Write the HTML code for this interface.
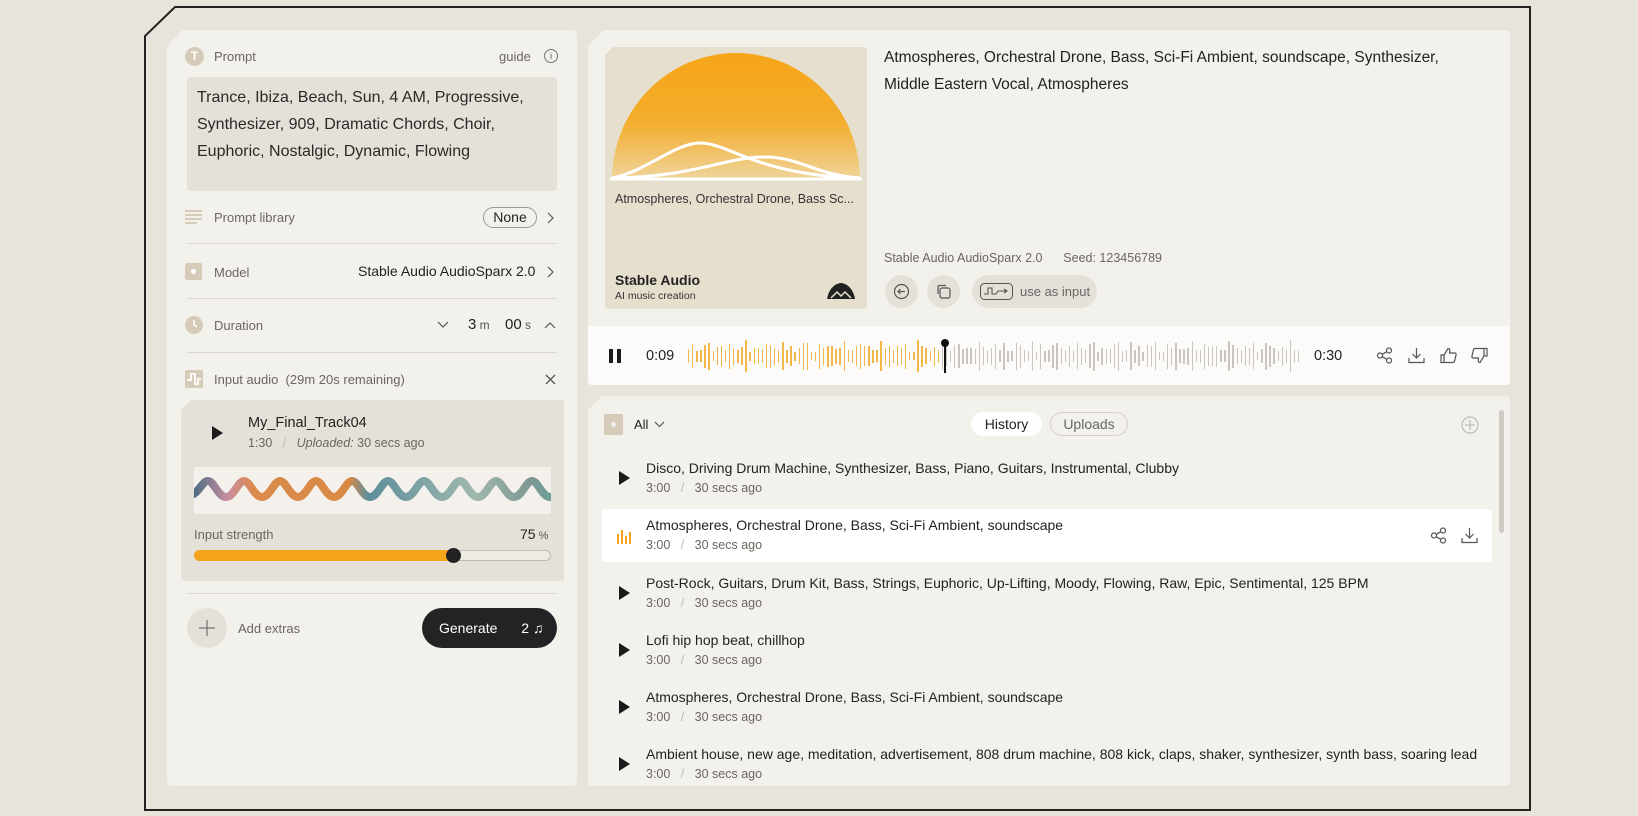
<!DOCTYPE html>
<html><head><meta charset="utf-8">
<style>
*{margin:0;padding:0;box-sizing:border-box}
body{width:1638px;height:816px;background:#e8e4dc;font-family:"Liberation Sans",sans-serif;color:#222;position:relative;overflow:hidden}
.a{position:absolute}
.panel{background:#f3f1ec;border-radius:4px}
.lbl{font-size:13px;color:#6b665f}
.sep{position:absolute;left:187px;width:370px;height:1px;background:#dcd7cd}
.t{font-size:14px;color:#222;white-space:nowrap;overflow:hidden;text-overflow:ellipsis;max-width:835px}
.sub{font-size:12.5px;color:#6b665f;white-space:nowrap}
.play{width:0;height:0;border-left:11px solid #1a1a1a;border-top:7px solid transparent;border-bottom:7px solid transparent}
</style></head><body>
<svg class="a" style="left:0;top:0" width="1638" height="816"><path d="M145,810 L145,36 L175,7 L1530,7 L1530,810 Z" fill="none" stroke="#222" stroke-width="2"/></svg>

<div class="a panel" style="left:167px;top:30px;width:410px;height:756px;clip-path:polygon(16px 0,100% 0,100% 100%,0 100%,0 16px)"></div>
<div class="a" style="left:185px;top:47px;width:19px;height:19px;border-radius:50%;background:#d6cbb8;color:#fff;font-size:12px;font-weight:bold;text-align:center;line-height:19px">T</div>
<div class="a lbl" style="left:214px;top:49px">Prompt</div>
<div class="a lbl" style="left:499px;top:49px">guide</div>
<div class="a" style="left:544px;top:49px;width:14px;height:14px;border:1px solid #777;border-radius:50%;font-size:9px;text-align:center;line-height:12px;color:#555">i</div>
<div class="a" style="left:187px;top:77px;width:370px;height:114px;background:#e6e1d8;border-radius:3px;padding:7px 10px;font-size:16px;line-height:27px;color:#2a2a2a">Trance, Ibiza, Beach, Sun, 4 AM, Progressive,<br>Synthesizer, 909, Dramatic Chords, Choir,<br>Euphoric, Nostalgic, Dynamic, Flowing</div>

<svg class="a" style="left:185px;top:209px" width="17" height="17"><g stroke="#d6cbb8" stroke-width="2"><line x1="0" y1="2" x2="17" y2="2"/><line x1="0" y1="6" x2="17" y2="6"/><line x1="0" y1="10" x2="17" y2="10"/><line x1="0" y1="14" x2="12" y2="14"/></g></svg>
<div class="a lbl" style="left:214px;top:210px">Prompt library</div>
<div class="a" style="left:483px;top:207px;width:54px;height:21px;border:1px solid #999;border-radius:11px;font-size:14px;text-align:center;line-height:19px">None</div>
<svg class="a" style="left:546px;top:212px" width="8" height="12"><path d="M2,1 L7,6 L2,11" fill="none" stroke="#555" stroke-width="1.2"/></svg>
<div class="sep" style="top:243px"></div>

<div class="a" style="left:185px;top:263px;width:17px;height:17px;background:#d6cbb8;border-radius:2px"><div style="margin:6px;width:5px;height:5px;border-radius:50%;background:#fff"></div></div>
<div class="a lbl" style="left:214px;top:265px">Model</div>
<div class="a" style="left:358px;top:263px;font-size:14px">Stable Audio AudioSparx 2.0</div>
<svg class="a" style="left:546px;top:266px" width="8" height="12"><path d="M2,1 L7,6 L2,11" fill="none" stroke="#555" stroke-width="1.2"/></svg>
<div class="sep" style="top:298px"></div>

<svg class="a" style="left:185px;top:316px" width="18" height="18"><circle cx="9" cy="9" r="9" fill="#d6cbb8"/><path d="M9,4 V9 L12,11" stroke="#fff" stroke-width="1.5" fill="none"/></svg>
<div class="a lbl" style="left:214px;top:318px">Duration</div>
<svg class="a" style="left:437px;top:321px" width="12" height="8"><path d="M1,1 L6,6 L11,1" fill="none" stroke="#555" stroke-width="1.2"/></svg>
<div class="a" style="left:468px;top:316px;font-size:15px">3<span style="font-size:12px;color:#555"> m</span></div>
<div class="a" style="left:505px;top:316px;font-size:15px">00<span style="font-size:12px;color:#555"> s</span></div>
<svg class="a" style="left:544px;top:321px" width="12" height="8"><path d="M1,7 L6,2 L11,7" fill="none" stroke="#555" stroke-width="1.2"/></svg>
<div class="sep" style="top:352px"></div>

<svg class="a" style="left:185px;top:370px" width="18" height="18"><rect width="18" height="18" rx="2" fill="#d6cbb8"/><path d="M2,10 H6 V4 H10 V14 H13 V9 H16" stroke="#fff" stroke-width="1.8" fill="none"/></svg>
<div class="a lbl" style="left:214px;top:372px">Input audio &nbsp;(29m 20s remaining)</div>
<svg class="a" style="left:545px;top:374px" width="11" height="11"><path d="M1,1 L10,10 M10,1 L1,10" stroke="#555" stroke-width="1.3"/></svg>

<div class="a" style="left:181px;top:400px;width:383px;height:181px;background:#e6e1d8;border-radius:3px;clip-path:polygon(10px 0,100% 0,100% 100%,0 100%,0 10px)"></div>
<div class="a play" style="left:212px;top:426px"></div>
<div class="a" style="left:248px;top:415px;font-size:14.5px">My_Final_Track04</div>
<div class="a sub" style="left:248px;top:436px">1:30 &nbsp;&nbsp;<span style="color:#bbb">/</span>&nbsp;&nbsp; <i>Uploaded:</i> 30 secs ago</div>
<div class="a" style="left:194px;top:467px;width:357px;height:47px;background:#f4f1ec;border-radius:2px;overflow:hidden">
<svg width="357" height="47"><defs><linearGradient id="wg" x1="0" x2="1"><stop offset="0" stop-color="#3d6a80"/><stop offset=".1" stop-color="#c98da0"/><stop offset=".17" stop-color="#db8a4a"/><stop offset=".42" stop-color="#d88a45"/><stop offset=".47" stop-color="#5e8e9a"/><stop offset=".75" stop-color="#9fb8ae"/><stop offset=".9" stop-color="#7f9894"/><stop offset="1" stop-color="#5aa59a"/></linearGradient></defs>
<path d="M-4,28 C4,28 8,14 14,14 C20,14 24,30 32,30 C40,30 44,14 50,14 C56,14 60,30 68,30 C76,30 80,14 86,14 C92,14 96,30 104,30 C112,30 116,14 122,14 C128,14 132,30 140,30 C148,30 152,14 158,14 C164,14 168,30 176,30 C184,30 188,14 194,14 C200,14 204,30 212,30 C220,30 224,14 230,14 C236,14 240,30 248,30 C256,30 260,14 266,14 C272,14 276,30 284,30 C292,30 296,14 302,14 C308,14 312,30 320,30 C328,30 332,14 338,14 C344,14 348,30 356,30 C364,30 368,14 374,14" fill="none" stroke="url(#wg)" stroke-width="8"/></svg></div>
<div class="a lbl" style="left:194px;top:527px">Input strength</div>
<div class="a" style="left:520px;top:526px;font-size:14px">75<span style="font-size:11px;color:#555"> %</span></div>
<div class="a" style="left:194px;top:550px;width:357px;height:11px;border:1px solid #bbb;border-radius:6px;background:#eeebe5"></div>
<div class="a" style="left:194px;top:550px;width:260px;height:11px;border-radius:6px;background:#f5a51c"></div>
<div class="a" style="left:446px;top:548px;width:15px;height:15px;border-radius:50%;background:#222"></div>
<div class="sep" style="top:593px"></div>
<div class="a" style="left:187px;top:608px;width:40px;height:40px;border-radius:50%;background:#e6e1d8"></div>
<svg class="a" style="left:198px;top:619px" width="18" height="18"><path d="M9,1 V17 M1,9 H17" stroke="#777" stroke-width="1.3"/></svg>
<div class="a lbl" style="left:238px;top:621px">Add extras</div>
<div class="a" style="left:422px;top:608px;width:135px;height:40px;border-radius:20px;background:#232326;color:#fff;font-size:14px;line-height:40px;padding-left:17px">Generate <span style="margin-left:20px">2 ♫</span></div>

<div class="a panel" style="left:588px;top:30px;width:922px;height:355px;clip-path:polygon(16px 0,100% 0,100% 100%,0 100%,0 16px)"></div>
<div class="a" style="left:605px;top:47px;width:262px;height:262px;background:#e6dfcd;border-radius:3px;overflow:hidden;clip-path:polygon(8px 0,100% 0,100% 100%,0 100%,0 8px)">
<svg width="262" height="140" style="position:absolute;left:0;top:0"><defs><linearGradient id="sun" x1="0" y1="0" x2="0" y2="1"><stop offset="0" stop-color="#f6a517"/><stop offset=".55" stop-color="#f4ad2e"/><stop offset="1" stop-color="#efd59c"/></linearGradient></defs>
<path d="M7,133 A124,127 0 0 1 255,133 Z" fill="url(#sun)"/>
<path d="M7,131 C40,125 70,96 95,96 C125,96 150,128 255,131" fill="none" stroke="#fff" stroke-width="3"/>
<path d="M7,131 C90,130 120,110 160,110 C195,110 210,128 255,131" fill="none" stroke="#fff" stroke-width="3"/>
<line x1="5" y1="132" x2="257" y2="132" stroke="#fff" stroke-width="3"/></svg>
<div class="a" style="left:10px;top:145px;font-size:12.5px;color:#333;white-space:nowrap">Atmospheres, Orchestral Drone, Bass Sc...</div>
<div class="a" style="left:10px;top:225px;font-size:14px;font-weight:bold">Stable Audio</div>
<div class="a" style="left:10px;top:243px;font-size:10.5px;color:#333">AI music creation</div>
<svg class="a" style="left:222px;top:236px" width="28" height="16"><path d="M0,16 C2,4 10,0 14,0 C18,0 26,4 28,16 Z" fill="#222"/><path d="M4,15 L10,9 L14,13 L18,9 L24,15" stroke="#e6dfcd" stroke-width="1.5" fill="none"/></svg>
</div>
<div class="a" style="left:884px;top:44px;font-size:15.5px;line-height:27px;color:#222">Atmospheres, Orchestral Drone, Bass, Sci-Fi Ambient, soundscape, Synthesizer,<br>Middle Eastern Vocal, Atmospheres</div>
<div class="a sub" style="left:884px;top:251px">Stable Audio AudioSparx 2.0 &nbsp;&nbsp;&nbsp;&nbsp; Seed: 123456789</div>
<div class="a" style="left:885px;top:275px;width:33px;height:33px;border-radius:50%;background:#e6e1d8"></div>
<svg class="a" style="left:893px;top:283px" width="17" height="17"><circle cx="8.5" cy="8.5" r="7" fill="none" stroke="#555" stroke-width="1.2"/><path d="M12,8.5 H5 M7.5,6 L5,8.5 L7.5,11" stroke="#555" stroke-width="1.2" fill="none"/></svg>
<div class="a" style="left:927px;top:275px;width:33px;height:33px;border-radius:50%;background:#e6e1d8"></div>
<svg class="a" style="left:935px;top:283px" width="17" height="17"><rect x="5" y="5" width="10" height="10" rx="2" fill="none" stroke="#555" stroke-width="1.2"/><path d="M3,11 V4 A1.5,1.5 0 0 1 4.5,2.5 H11" fill="none" stroke="#555" stroke-width="1.2"/></svg>
<div class="a" style="left:972px;top:275px;width:125px;height:33px;border-radius:17px;background:#e6e1d8;font-size:13px;color:#666;line-height:33px;padding-left:48px">use as input</div>
<svg class="a" style="left:980px;top:283px" width="33" height="17"><rect x=".5" y=".5" width="32" height="16" rx="4" fill="none" stroke="#555"/><path d="M4,11 H8 V5 H12 V11 H16 L18,8 H27 M24,6 L27,8 L24,10" fill="none" stroke="#555" stroke-width="1.1"/></svg>

<div class="a" style="left:588px;top:326px;width:922px;height:59px;background:#fcfbf9;border-radius:0 0 4px 4px"></div>
<div class="a" style="left:609px;top:349px;width:4px;height:14px;background:#1a1a1a"></div>
<div class="a" style="left:617px;top:349px;width:4px;height:14px;background:#1a1a1a"></div>
<div class="a" style="left:646px;top:348px;font-size:14.5px">0:09</div>
<div class="a" id="wave" style="left:688px;top:336px;width:612px;height:40px;display:flex;align-items:center;justify-content:space-between"></div>
<div class="a" style="left:944px;top:342px;width:2px;height:31px;background:#111"></div>
<div class="a" style="left:941px;top:339px;width:8px;height:8px;border-radius:50%;background:#111"></div>
<div class="a" style="left:1314px;top:348px;font-size:14.5px">0:30</div>
<svg class="a" style="left:1376px;top:347px" width="17" height="17"><g fill="none" stroke="#555" stroke-width="1.2"><circle cx="4" cy="8.5" r="2.5"/><circle cx="13" cy="3.5" r="2.5"/><circle cx="13" cy="13.5" r="2.5"/><path d="M6.2,7.3 L10.8,4.7 M6.2,9.7 L10.8,12.3"/></g></svg>
<svg class="a" style="left:1408px;top:347px" width="17" height="17"><g fill="none" stroke="#555" stroke-width="1.2"><path d="M8.5,1 V11 M4.5,7 L8.5,11 L12.5,7 M1,11 V15.5 H16 V11"/></g></svg>
<svg class="a" style="left:1440px;top:347px" width="17" height="17"><path d="M1,8 H4 V15.5 H1 Z M4,8 L8,1.5 C10,1.5 10,3 9.5,6 H15 C16,6 16.3,7 16,8 L14.5,14.5 C14.3,15.2 13.8,15.5 13,15.5 H4" fill="none" stroke="#555" stroke-width="1.2"/></svg>
<svg class="a" style="left:1471px;top:347px" width="17" height="17"><g transform="rotate(180 8.5 8.5)"><path d="M1,8 H4 V15.5 H1 Z M4,8 L8,1.5 C10,1.5 10,3 9.5,6 H15 C16,6 16.3,7 16,8 L14.5,14.5 C14.3,15.2 13.8,15.5 13,15.5 H4" fill="none" stroke="#555" stroke-width="1.2"/></g></svg>

<div class="a panel" style="left:588px;top:396px;width:922px;height:390px;clip-path:polygon(14px 0,100% 0,100% 100%,0 100%,0 14px)"></div>
<div class="a" style="left:604px;top:414px;width:19px;height:21px;background:#d6cbb8;border-radius:2px"><div style="margin:8px 7px;width:5px;height:5px;border-radius:50%;background:#eee"></div></div>
<div class="a" style="left:634px;top:417px;font-size:13px">All</div>
<svg class="a" style="left:654px;top:421px" width="11" height="7"><path d="M1,1 L5.5,5.5 L10,1" fill="none" stroke="#555" stroke-width="1.2"/></svg>
<div class="a" style="left:971px;top:412px;width:71px;height:24px;border-radius:12px;background:#fff;font-size:14px;text-align:center;line-height:24px">History</div>
<div class="a" style="left:1050px;top:412px;width:78px;height:24px;border-radius:12px;border:1px solid #d6d1c8;font-size:14px;text-align:center;line-height:22px;color:#666">Uploads</div>
<svg class="a" style="left:1461px;top:416px" width="18" height="18"><circle cx="9" cy="9" r="8" fill="none" stroke="#bbb" stroke-width="1.2"/><path d="M9,4 V14 M4,9 H14" stroke="#bbb" stroke-width="1.2"/></svg>
<div class="a" style="left:1499px;top:410px;width:5px;height:123px;border-radius:3px;background:#cfcbc4"></div>

<div class="a" style="left:602px;top:509px;width:890px;height:53px;background:#fff;border-radius:3px"></div>

<div class="a play" style="left:619px;top:471px"></div>
<div class="a t" style="left:646px;top:460px">Disco, Driving Drum Machine, Synthesizer, Bass, Piano, Guitars, Instrumental, Clubby</div>
<div class="a sub" style="left:646px;top:481px">3:00 &nbsp;&nbsp;<span style="color:#bbb">/</span>&nbsp;&nbsp; 30 secs ago</div>

<svg class="a" style="left:617px;top:528px" width="14" height="16"><g fill="#f5a51c"><rect x="0" y="6" width="2" height="10"/><rect x="4" y="2" width="2" height="14"/><rect x="8" y="8" width="2" height="8"/><rect x="12" y="4" width="2" height="12"/></g></svg>
<div class="a t" style="left:646px;top:517px">Atmospheres, Orchestral Drone, Bass, Sci-Fi Ambient, soundscape</div>
<div class="a sub" style="left:646px;top:538px">3:00 &nbsp;&nbsp;<span style="color:#bbb">/</span>&nbsp;&nbsp; 30 secs ago</div>
<svg class="a" style="left:1430px;top:527px" width="17" height="17"><g fill="none" stroke="#555" stroke-width="1.2"><circle cx="4" cy="8.5" r="2.5"/><circle cx="13" cy="3.5" r="2.5"/><circle cx="13" cy="13.5" r="2.5"/><path d="M6.2,7.3 L10.8,4.7 M6.2,9.7 L10.8,12.3"/></g></svg>
<svg class="a" style="left:1461px;top:527px" width="17" height="17"><path d="M8.5,1 V11 M4.5,7 L8.5,11 L12.5,7 M1,11 V15.5 H16 V11" fill="none" stroke="#555" stroke-width="1.2"/></svg>

<div class="a play" style="left:619px;top:586px"></div>
<div class="a t" style="left:646px;top:575px">Post-Rock, Guitars, Drum Kit, Bass, Strings, Euphoric, Up-Lifting, Moody, Flowing, Raw, Epic, Sentimental, 125 BPM</div>
<div class="a sub" style="left:646px;top:596px">3:00 &nbsp;&nbsp;<span style="color:#bbb">/</span>&nbsp;&nbsp; 30 secs ago</div>

<div class="a play" style="left:619px;top:643px"></div>
<div class="a t" style="left:646px;top:632px">Lofi hip hop beat, chillhop</div>
<div class="a sub" style="left:646px;top:653px">3:00 &nbsp;&nbsp;<span style="color:#bbb">/</span>&nbsp;&nbsp; 30 secs ago</div>

<div class="a play" style="left:619px;top:700px"></div>
<div class="a t" style="left:646px;top:689px">Atmospheres, Orchestral Drone, Bass, Sci-Fi Ambient, soundscape</div>
<div class="a sub" style="left:646px;top:710px">3:00 &nbsp;&nbsp;<span style="color:#bbb">/</span>&nbsp;&nbsp; 30 secs ago</div>

<div class="a play" style="left:619px;top:757px"></div>
<div class="a t" style="left:646px;top:746px">Ambient house, new age, meditation, advertisement, 808 drum machine, 808 kick, claps, shaker, synthesizer, synth bass, soaring lead</div>
<div class="a sub" style="left:646px;top:767px">3:00 &nbsp;&nbsp;<span style="color:#bbb">/</span>&nbsp;&nbsp; 30 secs ago</div>

<script>
var w=document.getElementById('wave'),h='';
for(var i=0;i<150;i++){var v=Math.abs(Math.sin(i*1.7)*0.6+Math.sin(i*0.37)*0.4);var ht=Math.round(8+v*22);if(i%7==0)ht=Math.min(32,ht+6);
h+='<span style="display:block;width:1.4px;height:'+ht+'px;background:'+(i<62?'#f2b84a':'#c9c6c1')+'"></span>';}
w.innerHTML=h;
</script>
</body></html>
